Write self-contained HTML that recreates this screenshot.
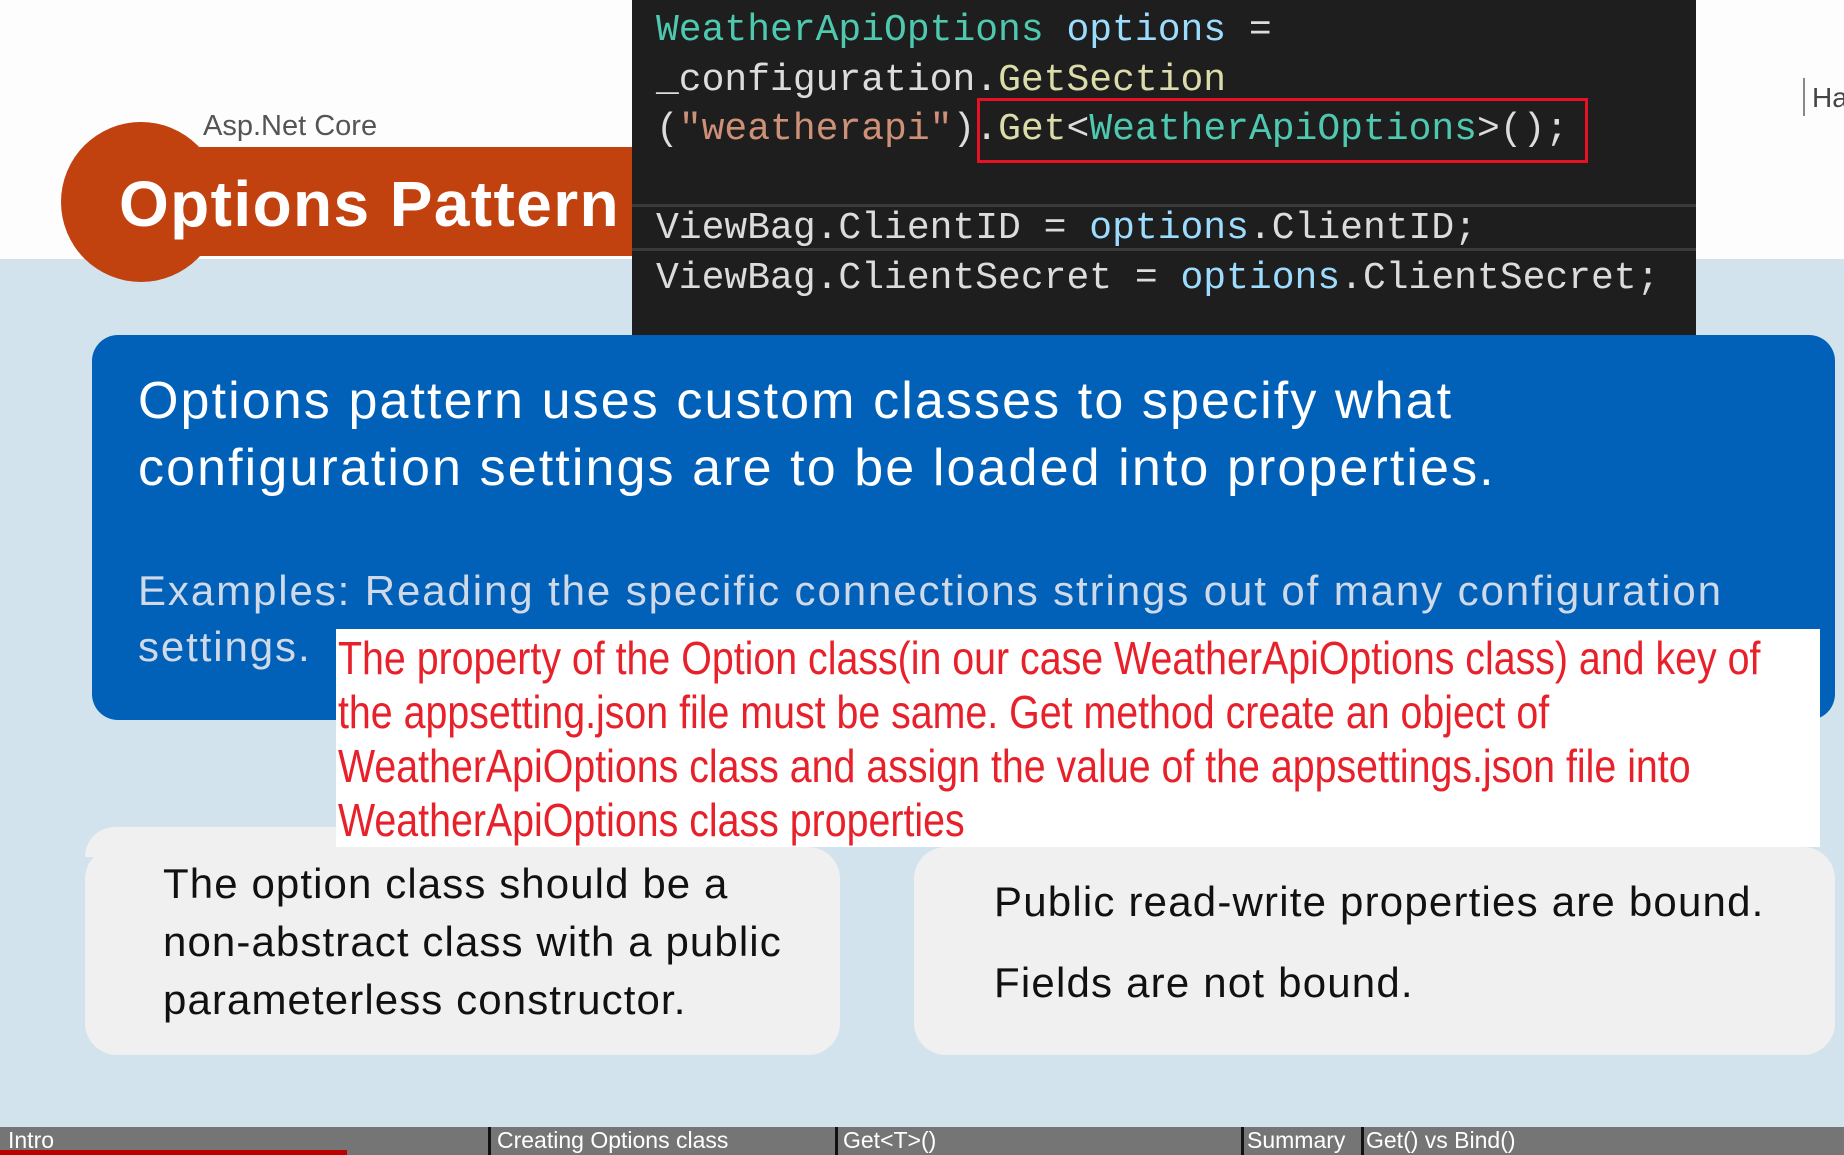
<!DOCTYPE html>
<html><head><meta charset="utf-8"><style>
*{margin:0;padding:0;box-sizing:border-box}
body{width:1844px;height:1155px;overflow:hidden;position:relative;background:#d3e3ee;font-family:"Liberation Sans",sans-serif}
.abs{position:absolute}
.code{font-family:"Liberation Mono",monospace;font-size:38px;color:#dcdcdc;white-space:pre;line-height:1}
.t{color:#4ec9b0}.v{color:#9cdcfe}.m{color:#dcdcaa}.s{color:#ce9178}
.red{color:#e8202a;font-size:46px;white-space:nowrap;transform:scaleX(0.855);transform-origin:0 0;line-height:54px}
.card{background:#f0f0f0;border-radius:32px;position:absolute;color:#111;font-size:42px}
</style></head><body>
<div class="abs" style="left:0;top:0;width:1844px;height:259px;background:#fdfdfd"></div>
<div class="abs" style="left:1803px;top:78px;width:2px;height:38px;background:#888"></div>
<div class="abs" style="left:1812px;top:82px;font-size:28px;color:#444">Ha</div>
<!-- orange pill -->
<div class="abs" style="left:141px;top:147px;width:500px;height:109px;background:#c1410f"></div>
<div class="abs" style="left:61px;top:122px;width:160px;height:160px;border-radius:50%;background:#c1410f"></div>
<div class="abs" style="left:203px;top:110px;font-size:29px;color:#555">Asp.Net Core</div>
<div class="abs" style="left:119px;top:167px;font-size:64px;font-weight:bold;color:#fff;letter-spacing:1.4px">Options Pattern</div>
<!-- code -->
<div class="abs" style="left:632px;top:0;width:1064px;height:335px;background:#1e1e1e"></div>
<div class="abs" style="left:632px;top:204px;width:1064px;height:3px;background:#3a3a3a"></div>
<div class="abs" style="left:632px;top:248px;width:1064px;height:3px;background:#3a3a3a"></div>
<div class="abs code" style="left:656px;top:12px"><span class="t">WeatherApiOptions</span> <span class="v">options</span> =</div>
<div class="abs code" style="left:656px;top:62px">_configuration.<span class="m">GetSection</span></div>
<div class="abs code" style="left:656px;top:111px">(<span class="s">"weatherapi"</span>).<span class="m">Get</span>&lt;<span class="t">WeatherApiOptions</span>&gt;();</div>
<div class="abs code" style="left:656px;top:210px">ViewBag.ClientID = <span class="v">options</span>.ClientID;</div>
<div class="abs code" style="left:656px;top:260px">ViewBag.ClientSecret = <span class="v">options</span>.ClientSecret;</div>
<div class="abs" style="left:977px;top:98px;width:611px;height:65px;border:3px solid #e81123"></div>
<!-- blue box -->
<div class="abs" style="left:92px;top:335px;width:1743px;height:385px;background:#0160b8;border-radius:26px"></div>
<div class="abs" style="left:138px;top:368px;font-size:52px;color:#fff;line-height:67px;letter-spacing:2.1px">Options pattern uses custom classes to specify what<br>configuration settings are to be loaded into properties.</div>
<div class="abs" style="left:138px;top:563px;font-size:42px;color:#cfd9e8;line-height:56px;letter-spacing:1.9px">Examples: Reading the specific connections strings out of many configuration<br>settings.</div>
<!-- red note -->
<div class="abs" style="left:336px;top:629px;width:1484px;height:218px;background:#fff"></div>
<div class="abs red" style="left:338px;top:631px">The property of the Option class(in our case WeatherApiOptions class) and key of<br>the appsetting.json file must be same. Get method create an object of<br>WeatherApiOptions class and assign the value of the appsettings.json file into<br>WeatherApiOptions class properties</div>
<!-- cards -->
<div class="card" style="left:85px;top:847px;width:755px;height:208px"></div>
<div class="abs" style="left:85px;top:827px;width:251px;height:30px;background:#f0f0f0;border-radius:32px 0 0 0"></div>
<div class="abs" style="left:163px;top:855px;font-size:42px;line-height:58px;color:#111;letter-spacing:1.1px">The option class should be a<br>non-abstract class with a public<br>parameterless constructor.</div>
<div class="card" style="left:914px;top:847px;width:921px;height:208px"></div>
<div class="abs" style="left:994px;top:861px;font-size:42px;line-height:81px;color:#111;letter-spacing:1.2px">Public read-write properties are bound.<br>Fields are not bound.</div>
<!-- bottom bar -->
<div class="abs" style="left:0;top:1127px;width:1844px;height:28px;background:#757575"></div>
<div class="abs" style="left:0;top:1150px;width:347px;height:5px;background:#b00"></div>
<div class="abs" style="left:488px;top:1127px;width:3px;height:28px;background:#111"></div>
<div class="abs" style="left:835px;top:1127px;width:3px;height:28px;background:#111"></div>
<div class="abs" style="left:1241px;top:1127px;width:3px;height:28px;background:#111"></div>
<div class="abs" style="left:1361px;top:1127px;width:3px;height:28px;background:#111"></div>
<div class="abs" style="left:8px;top:1127px;font-size:23px;color:#fff">Intro</div>
<div class="abs" style="left:497px;top:1127px;font-size:23px;color:#fff">Creating Options class</div>
<div class="abs" style="left:843px;top:1127px;font-size:23px;color:#fff">Get&lt;T&gt;()</div>
<div class="abs" style="left:1247px;top:1127px;font-size:23px;color:#fff">Summary</div>
<div class="abs" style="left:1366px;top:1127px;font-size:23px;color:#fff">Get() vs Bind()</div>
</body></html>
